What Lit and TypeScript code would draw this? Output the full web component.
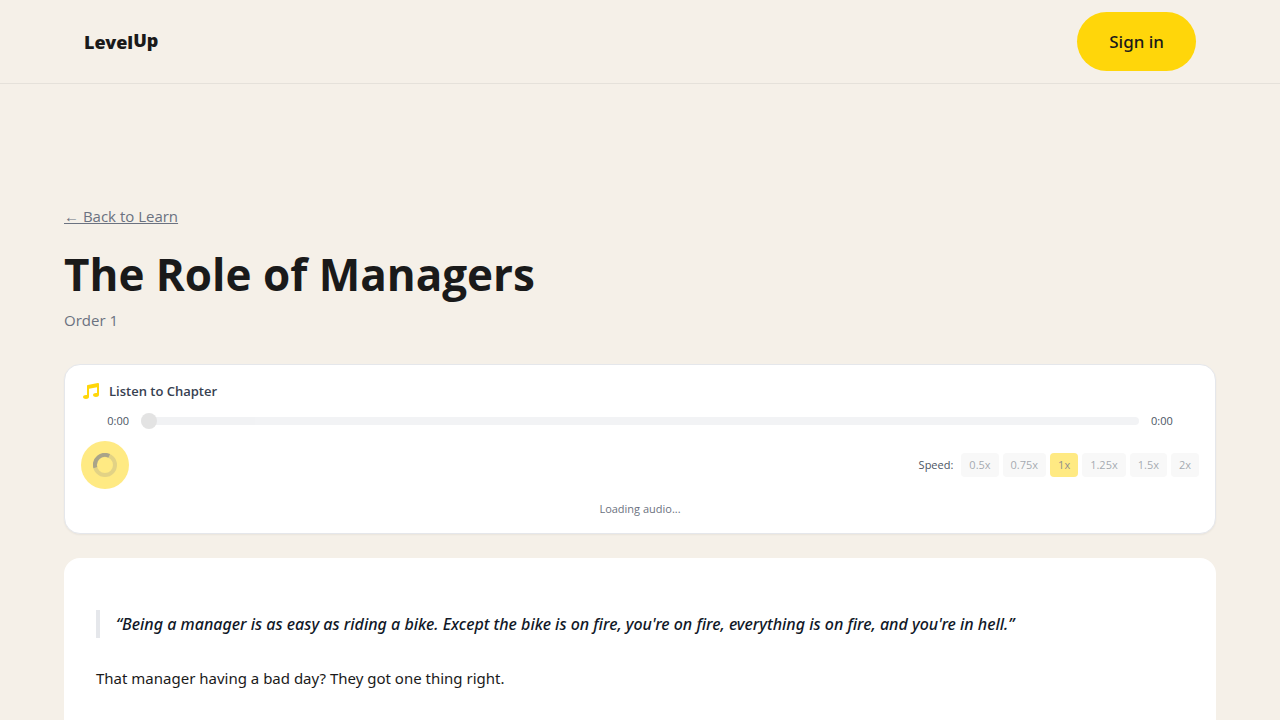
import { LitElement, html, css } from "lit";
import { customElement, state } from "lit/decorators.js";

@customElement("audio-player")
class AudioPlayer extends LitElement {
  @state() private speed = 1;
  private speeds = [0.5, 0.75, 1, 1.25, 1.5, 2];

  static styles = css`
    :host { display: block; }
    * { box-sizing: border-box; }
    .player {
      display: flex; flex-direction: column; gap: 12px;
      padding: 16px; background: #fff; border: 1px solid #e5e7eb;
      border-radius: 16px; box-shadow: 0 1px 2px rgba(0, 0, 0, 0.05);
      font-size: 11px; line-height: 16px; color: #4b5563;
    }
    .head { display: flex; align-items: center; gap: 8px; }
    .head svg { width: 20px; height: 20px; color: #ffd60a; }
    .title { margin: 0; font-size: 13px; line-height: 20px; font-weight: 600; color: #374151; }
    .timeline { display: flex; align-items: center; gap: 12px; }
    .time { width: 48px; }
    .time.now { text-align: right; }
    .seek {
      appearance: none; flex: 1; min-width: 0; height: 8px; margin: 0;
      background: #e5e7eb; border-radius: 8px; opacity: 0.5;
    }
    .seek::-webkit-slider-thumb {
      appearance: none; width: 16px; height: 16px; border-radius: 50%; background: #c8c8c8;
    }
    .controls { display: flex; align-items: center; justify-content: space-between; }
    button { font: inherit; border: 0; }
    .play {
      display: grid; place-items: center; width: 48px; height: 48px; padding: 0;
      border-radius: 50%; background: #ffd60a; color: #1a1a1a; opacity: 0.5;
    }
    .play svg { width: 24px; height: 24px; }
    .speeds { display: flex; align-items: center; gap: 4px; }
    .label { margin-right: 4px; }
    .speed {
      padding: 4px 8px; border-radius: 4px; background: #f3f3f3; color: #4b5563; opacity: 0.5;
    }
    .speed.active { background: #ffd60a; color: #1a1a1a; }
    .status { margin: 0; text-align: center; color: #6b7280; }
  `;

  render() {
    return html`
      <section class="player">
        <div class="head">
          <svg viewBox="0 0 20 20" fill="currentColor" aria-hidden="true">
            <path d="M18 3a1 1 0 00-1.196-.98l-10 2A1 1 0 006 5v9.114A4.369 4.369 0 005 14c-1.657 0-3 .895-3 2s1.343 2 3 2 3-.895 3-2V7.820l8-1.6v5.894A4.370 4.370 0 0015 12c-1.657 0-3 .895-3 2s1.343 2 3 2 3-.895 3-2V3z"/>
          </svg>
          <h2 class="title">Listen to Chapter</h2>
        </div>
        <div class="timeline">
          <span class="time now">0:00</span>
          <input class="seek" type="range" min="0" max="100" value="0" aria-label="Seek" disabled>
          <span class="time">0:00</span>
        </div>
        <div class="controls">
          <button class="play" aria-label="Play" disabled>
            <svg viewBox="0 0 24 24" fill="none" aria-hidden="true">
              <circle cx="12" cy="12" r="10" stroke="currentColor" stroke-width="4" opacity="0.25"/>
              <path d="M2.300 14.600A10 10 0 0 1 16.200 2.900" stroke="currentColor" stroke-width="4" opacity="0.65"/>
            </svg>
          </button>
          <div class="speeds" role="group" aria-label="Speed">
            <span class="label">Speed:</span>
            ${this.speeds.map((s) => html`
              <button class="speed ${s === this.speed ? "active" : ""}" disabled
                @click=${() => (this.speed = s)}>${s}x</button>`)}
          </div>
        </div>
        <p class="status">Loading audio...</p>
      </section>
    `;
  }
}

@customElement("app-root")
class AppRoot extends LitElement {
  static styles = css`
    :host {
      display: block; min-height: 100vh; background: #f5f0e8; color: #1a1a1a;
      font-family: "Segoe UI", "Open Sans", "Noto Sans", sans-serif;
      font-size: 15px; line-height: 24px;
    }
    * { box-sizing: border-box; }
    .bar { border-bottom: 1px solid #e5e1da; }
    .bar-inner {
      display: flex; align-items: center; justify-content: space-between;
      max-width: 1152px; margin: 0 auto; padding: 12px 20px;
    }
    .logo {
      display: flex; color: inherit; text-decoration: none;
      font-family: "Segoe UI", "Noto Sans", sans-serif; font-size: 18px; font-weight: 900;
    }
    .logo .up { position: relative; top: -2px; }
    .sign-in {
      padding: 16px 32px; border: 0; border-radius: 32px; background: #ffd60a;
      color: #1a1a1a; font-family: "Segoe UI", "Noto Sans", sans-serif;
      font-size: 17px; line-height: 27px; font-weight: 500;
    }
    main { max-width: 1280px; margin: 0 auto; padding: 120px 64px 0; }
    .back { color: #6b7280; }
    h1 { margin: 18px 0 6px; font-size: 44px; line-height: 56px; font-weight: 700; }
    .order { margin: 0 0 32px; color: #6b7280; }
    article {
      margin-top: 24px; padding: 52px 32px; background: #fff; border-radius: 16px;
      font-family: "Segoe UI", "Noto Sans", sans-serif; line-height: 28px;
    }
    blockquote {
      margin: 0; padding-left: 16px; border-left: 4px solid #e5e7eb;
      font-size: 16px; font-style: italic; font-weight: 500; color: #111827;
    }
    article p { margin: 26px 0 0; }
  `;

  render() {
    return html`
      <header class="bar">
        <div class="bar-inner">
          <a class="logo" href="#"><span>Level</span><span class="up">Up</span></a>
          <button class="sign-in">Sign in</button>
        </div>
      </header>
      <main>
        <a class="back" href="#">← Back to Learn</a>
        <h1>The Role of Managers</h1>
        <p class="order">Order 1</p>
        <audio-player></audio-player>
        <article>
          <blockquote>“Being a manager is as easy as riding a bike. Except the bike is on fire, you're on fire, everything is on fire, and you're in hell.”</blockquote>
          <p>That manager having a bad day? They got one thing right.</p>
        </article>
      </main>
    `;
  }
}
